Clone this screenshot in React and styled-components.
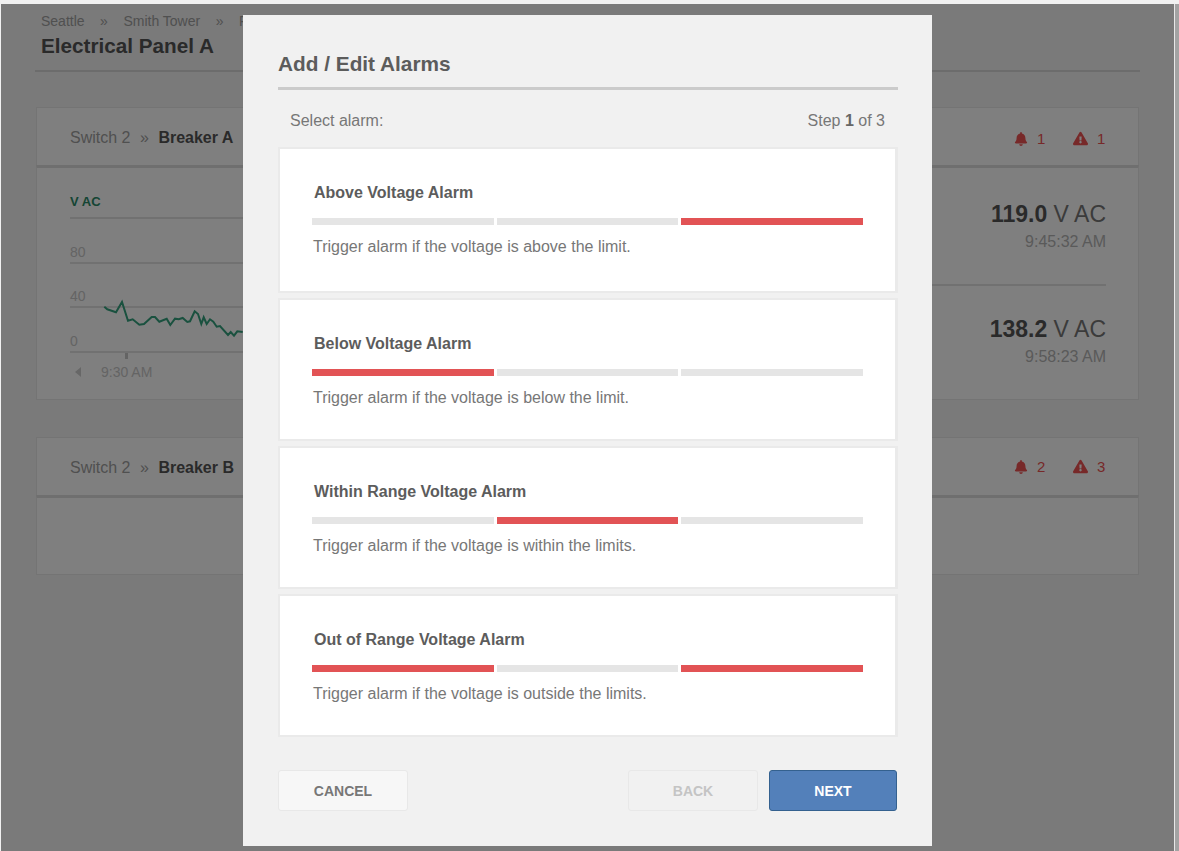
import React from 'react';
import styled, { createGlobalStyle } from 'styled-components';
import { FaBell, FaExclamationTriangle } from 'react-icons/fa';

const FONT = '"Liberation Sans", Arial, sans-serif';

const alarms = [
  { title: 'Above Voltage Alarm', bars: [false, false, true], text: 'Trigger alarm if the voltage is above the limit.' },
  { title: 'Below Voltage Alarm', bars: [true, false, false], text: 'Trigger alarm if the voltage is below the limit.' },
  { title: 'Within Range Voltage Alarm', bars: [false, true, false], text: 'Trigger alarm if the voltage is within the limits.' },
  { title: 'Out of Range Voltage Alarm', bars: [true, false, true], text: 'Trigger alarm if the voltage is outside the limits.' }
];

const linePoints = [
  [313, 260], [322, 268], [348, 277], [366, 246], [384, 302], [398, 298], [418, 314], [432, 312],
  [455, 291], [465, 291], [478, 305], [500, 296], [511, 315], [525, 296], [536, 298], [548, 294],
  [562, 306], [570, 304], [584, 274], [594, 282], [604, 312], [611, 292], [620, 312], [630, 298],
  [640, 305], [650, 320], [660, 318], [684, 345], [692, 336], [702, 347], [712, 334], [728, 336]
].map(([x, y]) => `${(x / 3 - 70).toFixed(1)},${(y / 3 + 220 - 219).toFixed(1)}`).join(' ');

const App = () => (
  <>
    <GlobalStyle />
    <Frame>
      <Viewport>
        <Page>
          <Crumbs>
            <span>Seattle</span>
            <CrumbSep>»</CrumbSep>
            <span>Smith Tower</span>
            <CrumbSep>»</CrumbSep>
            <span>Floor 12</span>
          </Crumbs>
          <PageTitle>Electrical Panel A</PageTitle>

          <Panel>
            <PanelHeader>
              <PanelName>
                Switch 2<NameSep>»</NameSep><strong>Breaker A</strong>
              </PanelName>
              <Alerts $low>
                <Alert><FaBell size={14} /><AlertCount>1</AlertCount></Alert>
                <Alert><FaExclamationTriangle size={15} /><AlertCount>1</AlertCount></Alert>
              </Alerts>
            </PanelHeader>
            <PanelBody>
              <Chart>
                <ChartTitle>V AC</ChartTitle>
                <Plot>
                  <GridRow>80</GridRow>
                  <GridRow>40</GridRow>
                  <GridRow>0</GridRow>
                  <PlotLine viewBox="0 0 174 132" width="174" height="132">
                    <polyline points={linePoints} fill="none" stroke="#34a27e" strokeWidth="2" />
                  </PlotLine>
                </Plot>
                <Tick />
                <TimeAxis>
                  <svg width="6" height="10" viewBox="0 0 6 10"><polygon points="6,0 6,10 0,5" fill="#cfcfcf" /></svg>
                  <span>9:30 AM</span>
                </TimeAxis>
              </Chart>
              <Readings>
                <Reading>
                  <ReadingValue><strong>119.0</strong> V AC</ReadingValue>
                  <ReadingTime>9:45:32 AM</ReadingTime>
                </Reading>
                <Reading>
                  <ReadingValue><strong>138.2</strong> V AC</ReadingValue>
                  <ReadingTime>9:58:23 AM</ReadingTime>
                </Reading>
              </Readings>
            </PanelBody>
          </Panel>

          <Panel>
            <PanelHeader>
              <PanelName>
                Switch 2<NameSep>»</NameSep><strong>Breaker B</strong>
              </PanelName>
              <Alerts>
                <Alert><FaBell size={14} /><AlertCount>2</AlertCount></Alert>
                <Alert><FaExclamationTriangle size={15} /><AlertCount>3</AlertCount></Alert>
              </Alerts>
            </PanelHeader>
            <EmptyBody />
          </Panel>
        </Page>

        <Overlay>
          <Modal>
            <ModalTitle>Add / Edit Alarms</ModalTitle>
            <StepRow>
              <span>Select alarm:</span>
              <span>Step <strong>1</strong> of 3</span>
            </StepRow>
            <AlarmList>
              {alarms.map((alarm) => (
                <AlarmCard key={alarm.title}>
                  <AlarmTitle>{alarm.title}</AlarmTitle>
                  <Bars>
                    {alarm.bars.map((on, i) => <Bar key={i} $on={on} />)}
                  </Bars>
                  <AlarmText>{alarm.text}</AlarmText>
                </AlarmCard>
              ))}
            </AlarmList>
            <Footer>
              <Button type="button">Cancel</Button>
              <FooterRight>
                <Button type="button" $disabled>Back</Button>
                <Button type="button" $primary>Next</Button>
              </FooterRight>
            </Footer>
          </Modal>
        </Overlay>
      </Viewport>
      <ScrollRail />
    </Frame>
  </>
);

export default App;

const GlobalStyle = createGlobalStyle`
  html, body {
    margin: 0;
    height: 100%;
    overflow: hidden;
    background: #f1f1f1;
  }
  * {
    box-sizing: border-box;
  }
`;

const Frame = styled.div`
  display: flex;
  height: 851px;
  padding: 4px 0 0 1px;
  font-family: ${FONT};
`;

const Viewport = styled.div`
  position: relative;
  flex: 1;
  background: #f4f4f4;
  overflow: hidden;
`;

const ScrollRail = styled.div`
  width: 5px;
  border-left: 1px solid #e8e8e8;
  background: #a3a3a3;
`;

const Page = styled.div`
  padding: 10px 34px 0;
`;

const Crumbs = styled.div`
  display: flex;
  padding-left: 6px;
  font-size: 14px;
  line-height: 15px;
  color: #a0a0a0;
`;

const CrumbSep = styled.span`
  margin: 0 15.5px;
`;

const PageTitle = styled.h1`
  margin: 0 0 35px;
  padding: 5px 0 12px 6px;
  border-bottom: 2px solid #d8d8d8;
  font-size: 20.7px;
  line-height: 24px;
  font-weight: 700;
  color: #555;
`;

const Panel = styled.section`
  margin: 0 1px 37px;
`;

const PanelHeader = styled.header`
  display: flex;
  align-items: center;
  justify-content: space-between;
  height: 58px;
  padding: 2px 32px 0 33px;
  background: #fff;
  border: 1px solid #e8e8e8;
  border-bottom: none;
`;

const PanelName = styled.div`
  font-size: 16px;
  color: #a0a0a0;
  strong {
    color: #555;
    font-weight: 700;
  }
`;

const NameSep = styled.span`
  margin: 0 9.5px;
`;

const Alerts = styled.div`
  display: flex;
  gap: 27px;
  padding: ${(props) => (props.$low ? '2px 0 0' : '0 0 2px')};
`;

const Alert = styled.div`
  display: flex;
  align-items: center;
  gap: 9px;
  font-size: 15px;
  color: #ee5252;
`;

const AlertCount = styled.span`
  min-width: 9px;
`;

const PanelBody = styled.div`
  display: flex;
  justify-content: space-between;
  height: 235px;
  padding: 0 32px 0 33px;
  background: #fff;
  border: 1px solid #e8e8e8;
  border-top: 3px solid #dedede;
`;

const EmptyBody = styled.div`
  height: 80px;
  background: #fff;
  border: 1px solid #e8e8e8;
  border-top: 3px solid #dedede;
`;

const Chart = styled.div`
  width: 720px;
`;

const ChartTitle = styled.div`
  height: 51px;
  padding-top: 26px;
  border-bottom: 2px solid #e2e2e2;
  font-size: 13px;
  line-height: 15px;
  font-weight: 700;
  color: #2a8a68;
`;

const Plot = styled.div`
  position: relative;
`;

const GridRow = styled.div`
  display: flex;
  align-items: flex-end;
  height: 44.5px;
  padding-bottom: 2px;
  border-bottom: 2px solid #e2e2e2;
  font-size: 14px;
  line-height: 15px;
  color: #c8c8c8;
`;

const PlotLine = styled.svg`
  position: absolute;
  left: 0;
  top: 0;
`;

const Tick = styled.div`
  width: 3px;
  height: 6px;
  margin-left: 55px;
  background: #c8c8c8;
`;

const TimeAxis = styled.div`
  display: flex;
  align-items: center;
  gap: 20px;
  padding: 6px 0 0 5px;
  font-size: 14px;
  line-height: 15px;
  color: #c8c8c8;
`;

const Readings = styled.div`
  display: flex;
  flex-direction: column;
  width: 260px;
`;

const Reading = styled.div`
  height: 116px;
  padding-top: 33px;
  text-align: right;
  & + & {
    height: 115px;
    padding-top: 30px;
    border-top: 2px solid #e2e2e2;
  }
`;

const ReadingValue = styled.div`
  font-size: 23px;
  line-height: 26px;
  color: #777;
  strong {
    color: #555;
    font-weight: 700;
  }
`;

const ReadingTime = styled.div`
  margin-top: 6px;
  font-size: 16px;
  line-height: 17px;
  color: #b4b4b4;
`;

const Overlay = styled.div`
  position: absolute;
  inset: 0;
  display: flex;
  justify-content: center;
  padding-top: 11px;
  background: rgba(0, 0, 0, 0.5);
`;

const Modal = styled.div`
  width: 689px;
  height: 831px;
  padding: 0 34px 0 35px;
  background: #f1f1f1;
`;

const ModalTitle = styled.h2`
  margin: 0;
  padding: 36px 0 11px;
  border-bottom: 3px solid #cbcbcb;
  font-size: 20.8px;
  line-height: 25px;
  font-weight: 700;
  color: #5c5c5c;
`;

const StepRow = styled.div`
  display: flex;
  justify-content: space-between;
  padding: 22px 13px 0 12px;
  height: 57px;
  font-size: 16px;
  line-height: 18px;
  color: #777;
  strong {
    color: #666;
  }
`;

const AlarmList = styled.div`
  display: flex;
  flex-direction: column;
  gap: 5px;
`;

const AlarmCard = styled.div`
  height: 143px;
  padding: 35px 32px 0;
  background: #fff;
  border: 2px solid #eaeaea;
  border-right-width: 3px;
  &:first-child {
    height: 146px;
  }
`;

const AlarmTitle = styled.div`
  padding-left: 2px;
  font-size: 16px;
  line-height: 18px;
  font-weight: 700;
  color: #5c5c5c;
`;

const Bars = styled.div`
  display: grid;
  grid-template-columns: repeat(3, 1fr);
  gap: 3px;
  margin-top: 16px;
`;

const Bar = styled.div`
  height: 7px;
  background: ${(props) => (props.$on ? '#e25355' : '#e5e5e5')};
`;

const AlarmText = styled.div`
  margin-top: 13px;
  padding-left: 1px;
  font-size: 16px;
  line-height: 18px;
  color: #777;
`;

const Footer = styled.div`
  display: flex;
  justify-content: space-between;
  margin-top: 33px;
  padding-right: 1px;
`;

const FooterRight = styled.div`
  display: flex;
  gap: 11px;
`;

const Button = styled.button`
  width: ${(props) => (props.$primary ? '128px' : '130px')};
  height: 41px;
  padding: 0;
  border-radius: 3px;
  border: 1px solid ${(props) => (props.$primary ? '#34618f' : '#e8e8e8')};
  background: ${(props) => (props.$primary ? '#5380ba' : props.$disabled ? '#f1f1f1' : '#f7f7f7')};
  color: ${(props) => (props.$primary ? '#fff' : props.$disabled ? '#c4c4c4' : '#777')};
  font-family: ${FONT};
  font-size: 14px;
  font-weight: 700;
  text-transform: uppercase;
`;
